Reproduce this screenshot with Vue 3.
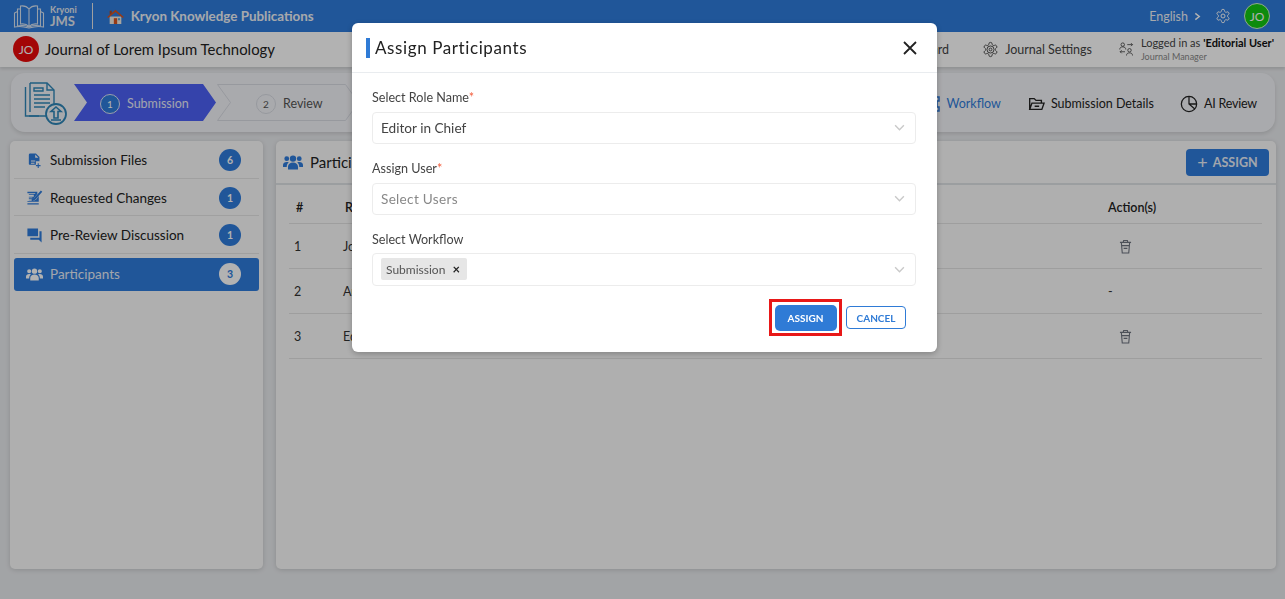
<template>
  <div class="page">
    <header class="topbar">
      <svg class="logo" viewBox="0 0 32 26" fill="none" stroke="#d9e4f2" stroke-width="1.1">
        <path d="M16 6C14 3.5 11 2.5 7.5 3v18c3.500-.5 6.500.3 8.500 2.500 2-2.200 5-3 8.500-2.500V3C21 2.500 18 3.500 16 6zM16 6v17" />
        <path d="M7.500 6H4.500v17c4-.8 8-.5 11.500 1 3.500-1.500 7.500-1.800 11.500-1V6h-3" />
        <path d="M4.500 8.500L1.500 10v14c4-1 9-.6 14.500 1 5.500-1.600 10.500-2 14.500-1V10l-3-1.500" />
      </svg>
      <div class="logo-text"><span>Kryoni</span><b>JMS</b></div>
      <div class="top-sep"></div>
      <svg class="home" viewBox="0 0 20 18">
        <path d="M3 9h14v9H3z" fill="#f1ece4" />
        <path d="M8 11h4v7H8z" fill="#d9531e" />
        <path d="M13 11h2.500v2.500H13z" fill="#5aa5d8" />
        <path d="M10 1L0 9.500l1.300 1.300L10 3.500l8.700 7.300 1.300-1.300z" fill="#d9531e" />
        <path d="M3 2h2.500v3L3 7z" fill="#b5461a" />
      </svg>
      <span class="pub">Kryon Knowledge Publications</span>
      <span class="lang">English <svg viewBox="0 0 8 10" class="lang-arrow" fill="none" stroke="#fff" stroke-width="1.700"><path d="M1.500 1.500L6 5l-4.500 3.500" /></svg></span>
      <svg class="top-gear" viewBox="0 0 24 24" fill="none" stroke="#fff" stroke-width="1.500">
        <path :d="gearPath" /><circle cx="12" cy="12" r="3" />
      </svg>
      <span class="avatar green">JO</span>
    </header>

    <div class="journalbar">
      <span class="avatar red">JO</span>
      <span class="journal-name">Journal of Lorem Ipsum Technology</span>
      <nav class="journal-nav">
        <span class="jn-item dash">Dashboard</span>
        <span class="jn-item settings">
          <svg viewBox="0 0 24 24" fill="none" stroke="#444" stroke-width="1.300">
            <path :d="gearPath" /><circle cx="12" cy="12" r="5" /><circle cx="12" cy="12" r="2" />
          </svg>
          Journal Settings
        </span>
        <span class="jn-user">
          <svg viewBox="0 0 20 20" fill="none" stroke="#444" stroke-width="1.100">
            <circle cx="5" cy="3.500" r="2.300" /><path d="M1 10c0-2.500 1.500-3.500 4-3.500S9 7.500 9 10" />
            <circle cx="14" cy="11" r="2.300" /><path d="M10 18c0-2.500 1.500-3.500 4-3.500s4 1 4 3.500" />
            <path d="M11 3.500h7M16 1.500l2 2-2 2M8 13H1.500M3.500 11l-2 2 2 2" />
          </svg>
          <span class="jn-user-text">
            <span class="jn-logged">Logged in as <b>'Editorial User'</b></span>
            <span class="jn-role">Journal Manager</span>
          </span>
        </span>
      </nav>
    </div>

    <section class="stepper">
      <svg class="step-doc" viewBox="0 0 44 44" fill="none" stroke="#2f86b8" stroke-width="1.400">
        <path d="M6 2h17l7 7v26H1.500V6" />
        <path d="M23 2v7h7" />
        <path d="M6 2v29" />
        <path d="M10 7h9v3h-9zM10 14h16M10 18h16M10 22h16M10 26h11M5 35h10" />
        <circle cx="32" cy="33" r="10" fill="#f0f2f6" stroke-width="1.800" />
        <path d="M32 26l5 4.500h-3V37h-4v-6.500h-3zM27 39h10" stroke-width="1.600" />
      </svg>
      <div class="step active">
        <svg class="step-shape" viewBox="0 0 142 37" preserveAspectRatio="none"><path d="M0 0h129l13 18.500-13 18.500H0l13-18.500z" fill="#4c61f5" /></svg>
        <span class="step-num">1</span><span class="step-label">Submission</span>
      </div>
      <div class="step next">
        <svg class="step-shape" viewBox="0 0 142 37" preserveAspectRatio="none"><path d="M.5.500h128l13 18-13 18H.5l13-18z" fill="none" stroke="#d8dbe3" /></svg>
        <span class="step-num">2</span><span class="step-label">Review</span>
      </div>
      <div class="step-tabs">
        <span class="tab current">
          <svg viewBox="0 0 18 18" fill="none" stroke="#2f7bd9" stroke-width="1.500"><path d="M2 2h4v4H2zM12 2h4v4h-4zM12 12h4v4h-4zM6 4h6M14 6v6" /></svg>
          Workflow
        </span>
        <span class="tab">
          <svg viewBox="0 0 20 18" fill="none" stroke="#222" stroke-width="1.500"><path d="M3 15V3h5l2 2h6v3M3 15l2.500-7H19l-2.500 7zM8.500 11.500h5" /></svg>
          Submission Details
        </span>
        <span class="tab ai">
          <svg viewBox="0 0 20 20" fill="none" stroke="#222" stroke-width="1.400"><circle cx="10" cy="10" r="8.500" /><path d="M10 1.500V10l6.500 5.500M10 10h8.500" /></svg>
          AI Review
        </span>
      </div>
    </section>

    <div class="content">
      <aside class="side">
        <div v-for="item in sideItems" :key="item.label" class="side-row" :class="{ on: item.on }">
          <svg class="side-ico" :viewBox="item.box || '0 0 24 24'"><path :d="item.icon" /></svg>
          <span class="side-label">{{ item.label }}</span>
          <span class="side-badge">{{ item.count }}</span>
        </div>
      </aside>
      <main class="panel">
        <div class="panel-head">
          <svg class="panel-ico" viewBox="0 0 24 20"><path :d="groupsPath" /></svg>
          <span class="panel-title">Participants</span>
          <button class="add-btn"><span class="plus">+</span> ASSIGN</button>
        </div>
        <table class="tbl">
          <thead>
            <tr><th class="c-n">#</th><th class="c-r">Role</th><th>User</th><th class="c-a">Action(s)</th></tr>
          </thead>
          <tbody>
            <tr v-for="(row, i) in rows" :key="row.role">
              <td>{{ i + 1 }}</td>
              <td :class="{ link: i === 0 }">{{ row.role }}</td>
              <td>{{ row.user }}</td>
              <td>
                <svg v-if="row.del" class="trash" viewBox="0 0 14 16" fill="none" stroke="#6f7480" stroke-width="1.200">
                  <path d="M1 3.500h12M4.500 3.500l.5-2h4l.5 2M2.500 3.500l1 11.500h7l1-11.500M3 7h8M5 10h4" />
                </svg>
                <span v-else>-</span>
              </td>
            </tr>
          </tbody>
        </table>
      </main>
    </div>

    <div class="overlay"></div>

    <div class="modal">
      <div class="modal-head">
        <span class="modal-bar"></span>
        <span class="modal-title">Assign Participants</span>
        <svg class="modal-close" viewBox="0 0 14 14" fill="none" stroke="#222" stroke-width="1.800"><path d="M1 1l12 12M13 1L1 13" /></svg>
      </div>
      <div class="modal-body">
        <label class="fld-label">Select Role Name<i>*</i></label>
        <div class="select">
          <span class="sel-val">Editor in Chief</span>
          <svg class="chev" viewBox="0 0 12 8" fill="none" stroke="#c9c9c9" stroke-width="1.600"><path d="M1 1.500l5 5 5-5" /></svg>
        </div>
        <label class="fld-label">Assign User<i>*</i></label>
        <div class="select">
          <span class="sel-ph">Select Users</span>
          <svg class="chev" viewBox="0 0 12 8" fill="none" stroke="#c9c9c9" stroke-width="1.600"><path d="M1 1.500l5 5 5-5" /></svg>
        </div>
        <label class="fld-label tight">Select Workflow</label>
        <div class="select tall">
          <span class="chip">Submission <span class="chip-x">×</span></span>
          <svg class="chev" viewBox="0 0 12 8" fill="none" stroke="#c9c9c9" stroke-width="1.600"><path d="M1 1.500l5 5 5-5" /></svg>
        </div>
        <div class="modal-actions">
          <span class="mark"><button class="btn-assign">ASSIGN</button></span>
          <button class="btn-cancel">CANCEL</button>
        </div>
      </div>
    </div>
  </div>
</template>

<script setup>
const gearPath = 'M12.22 2h-.44a2 2 0 0 0-2 2v.18a2 2 0 0 1-1 1.730l-.43.250a2 2 0 0 1-2 0l-.15-.08a2 2 0 0 0-2.730.730l-.22.380a2 2 0 0 0 .730 2.730l.15.100a2 2 0 0 1 1 1.720v.510a2 2 0 0 1-1 1.740l-.15.090a2 2 0 0 0-.730 2.730l.22.380a2 2 0 0 0 2.730.730l.15-.08a2 2 0 0 1 2 0l.43.250a2 2 0 0 1 1 1.730V20a2 2 0 0 0 2 2h.44a2 2 0 0 0 2-2v-.18a2 2 0 0 1 1-1.730l.43-.25a2 2 0 0 1 2 0l.15.080a2 2 0 0 0 2.730-.730l.22-.39a2 2 0 0 0-.730-2.730l-.15-.08a2 2 0 0 1-1-1.740v-.5a2 2 0 0 1 1-1.740l.15-.09a2 2 0 0 0 .730-2.730l-.22-.38a2 2 0 0 0-2.730-.730l-.15.080a2 2 0 0 1-2 0l-.43-.25a2 2 0 0 1-1-1.730V4a2 2 0 0 0-2-2z'
const groupsPath = 'M12 1.500a3.800 3.800 0 1 1 0 7.600 3.800 3.800 0 0 1 0-7.600zM4.500 2.500a2.900 2.900 0 1 1 0 5.800 2.900 2.900 0 0 1 0-5.800zM19.500 2.500a2.900 2.900 0 1 1 0 5.800 2.900 2.900 0 0 1 0-5.800zM6 18.500v-3.500c0-3 2.600-5 6-5s6 2 6 5v3.500zM0 15.500v-2.500c0-2 2-3.600 4.500-3.600.9 0 1.700.2 2.400.6C5.300 11.200 4.500 13 4.500 15v.5zM24 15.500v-2.500c0-2-2-3.600-4.500-3.600-.9 0-1.700.2-2.400.6 1.600 1.200 2.400 3 2.400 5v.5z'

const sideItems = [
  { label: 'Submission Files', count: 6, icon: 'M6 2h8l5 5v6h-5v5H5a1 1 0 0 1-1-1V4a2 2 0 0 1 2-2zm7 1.500V8h4.500zM7 12v1.500h6V12zm0 3v1.500h5V15zm11 1v2.500h2.500V20H18v2.500h-1.500V20H14v-1.500h2.500V16z' },
  { label: 'Requested Changes', count: 1, icon: 'M2 4h14v3l-5 6-.5 3.500L14 15l4-5v8H2v-1h6v-1H4v-1h4v-1H4v-1h5v-1H4v-1h7V8H4V7h9V6H2zm19-2l2 2-10 11-2.500 1 .5-2.500zM2 20h16v2H2z' },
  { label: 'Pre-Review Discussion', count: 1, icon: 'M22 6h-3v9H6v3h12l4 4V6zm-5 7V2H2v11z' },
  { label: 'Participants', count: 3, icon: groupsPath, box: '0 0 24 20', on: true }
]

const rows = [
  { role: 'Journal Manager', user: '', del: true },
  { role: 'Author', user: '', del: false },
  { role: 'Editor in Chief', user: '', del: true }
]
</script>

<style>
html, body { background: #fff; }
* { box-sizing: border-box; }
</style>

<style scoped>
.page {
  height: 599px; overflow: hidden; background: #e9ebee;
  font-family: Lato, "Noto Sans", sans-serif; color: #222;
  display: flex; flex-direction: column;
}

.topbar {
  height: 32px; flex-shrink: 0; background: #2e7bdb; color: #fff;
  display: flex; align-items: center; padding: 0 15px 0 13px;
}
.logo { width: 32px; height: 26px; }
.logo-text { display: flex; flex-direction: column; margin-left: 5px; line-height: 1; color: #e2e8f0; }
.logo-text span { font-size: 9px; font-weight: 700; }
.logo-text b { font-size: 13px; margin-top: 1px; }
.top-sep { width: 1px; height: 26px; background: #e6e6e6; margin: 0 14px 0 15px; }
.home { width: 17px; height: 15px; margin-right: 7px; }
.pub { font-size: 13.400px; font-weight: 700; color: #eef2f7; }
.lang { margin-left: auto; font-size: 12.500px; display: flex; align-items: center; gap: 6px; color: #eef2f7; }
.lang-arrow { width: 7px; height: 9px; }
.top-gear { width: 16px; height: 16px; margin: 0 13px 0 14px; }

.avatar {
  width: 26px; height: 26px; border-radius: 50%; color: #fff; font-size: 12px;
  display: flex; align-items: center; justify-content: center; flex-shrink: 0;
}
.green { background: #14c814; border: 1px solid #d0f0d0; }
.red { background: #ea0a0a; }

.journalbar {
  height: 35px; flex-shrink: 0; background: #fff; display: flex; align-items: center;
  padding: 0 11px 1px 13px; box-shadow: 0 2px 3px rgba(0,0,0,.12);
}
.journal-name { margin-left: 6px; font-size: 14.900px; color: #222; }
.journal-nav { margin-left: auto; display: flex; align-items: center; gap: 27px; }
.jn-item { font-size: 12.500px; color: #444; display: flex; align-items: center; gap: 6px; }
.jn-item svg { width: 17px; height: 17px; }
.dash { margin-right: 6px; }
.jn-user { display: flex; align-items: center; gap: 7px; }
.jn-user svg { width: 15px; height: 15px; }
.jn-user-text { display: flex; flex-direction: column; }
.jn-logged { font-size: 11px; color: #444; }
.jn-logged b { color: #111; }
.jn-role { font-size: 9px; color: #888; margin-top: 2px; }

.stepper {
  height: 59px; margin: 6px 10px 0 11px; flex-shrink: 0; background: #f3f4f8;
  border-radius: 14px; display: flex; align-items: center; padding: 0 18px 0 13px;
  box-shadow: 0 2px 4px rgba(0,0,0,.12);
}
.step-doc { width: 44px; height: 44px; margin-right: 6px; flex-shrink: 0; }
.step {
  width: 142px; height: 37px; position: relative; display: flex; align-items: center;
  padding: 2px 0 0 26px; gap: 7px; font-size: 12.500px; color: #555; flex-shrink: 0;
}
.next { margin-left: 1px; padding-left: 39px; }
.step-shape { position: absolute; inset: 0; width: 100%; height: 100%; }
.step-num {
  position: relative; width: 20px; height: 20px; border-radius: 50%; border: 1px solid #d8dbe3;
  display: flex; align-items: center; justify-content: center; font-size: 10px;
}
.step-label { position: relative; }
.active { color: #e8ebf8; }
.active .step-num { background: #2e7bdb; border-color: #dfe5f5; color: #fff; }
.step-tabs { margin-left: auto; display: flex; align-items: center; gap: 26px; padding-top: 2px; }
.tab { font-size: 12.500px; color: #222; display: flex; align-items: center; gap: 6px; }
.tab svg { width: 18px; height: 18px; }
.tab.current { color: #2f7bd9; }
.tab.ai { letter-spacing: -.2px; }

.content { flex: 1; display: flex; gap: 13px; margin: 9px 9px 30px 10px; min-height: 0; }
.side {
  width: 253px; flex-shrink: 0; background: #fbfbfb; border-radius: 5px; padding: 0 4px;
  box-shadow: 0 1px 5px rgba(0,0,0,.15);
}
.side-row {
  height: 37.500px; display: flex; align-items: center; padding: 2px 18px 0 12px;
  border-bottom: 1px solid #e6e6e6; font-size: 13.500px; color: #222;
}
.side-ico { width: 17px; height: 17px; fill: #2e7bdb; margin-right: 7px; flex-shrink: 0; }
.side-badge {
  margin-left: auto; width: 22px; height: 22px; border-radius: 50%; background: #2e7bdb; color: #fff;
  display: flex; align-items: center; justify-content: center; font-size: 10.500px; font-weight: 700;
}
.side-row.on { background: #2e7bdb; color: #e8eef7; border: 0; border-radius: 3px; height: 33px; margin-top: 4px; padding-top: 0; }
.on .side-ico { fill: #fff; }
.on .side-badge { background: #fff; color: #2e7bdb; }

.panel { flex: 1; background: #fbfbfb; border-radius: 5px; box-shadow: 0 1px 5px rgba(0,0,0,.15); }
.panel-head {
  height: 44px; display: flex; align-items: center; padding: 0 7px;
  border-bottom: 2px solid #dfe2e6;
}
.panel-ico { width: 20px; height: 17px; fill: #2e7bdb; margin-right: 7px; }
.panel-title { font-size: 15px; color: #222; }
.add-btn {
  margin-left: auto; width: 83px; height: 27px; background: #2e7bdb; color: #e8eef7; border: 0;
  border-radius: 4px; font: 700 12.500px Lato, sans-serif; display: flex; align-items: center;
  justify-content: center; gap: 5px;
}
.plus { font-size: 18px; font-weight: 400; line-height: 1; }
.tbl { width: 973px; margin: 4px 0 0 13px; border-collapse: collapse; font-size: 12.500px; table-layout: fixed; }
.tbl th { height: 34px; text-align: left; font-weight: 600; color: #222; border-bottom: 1px solid #e3e3e3; padding: 3px 0 0 7px; }
.tbl td { height: 45px; color: #333; border-bottom: 1px solid #e3e3e3; padding: 1px 0 0 5px; }
.c-n { width: 49px; }
.c-r { width: 250px; }
.tbl th.c-a { width: 154px; padding-left: 0; }
.tbl td:last-child { padding-left: 0; }
.link { color: #2e7bdb; }
.trash { width: 13px; height: 15px; margin-left: 11px; display: block; }

.overlay { position: fixed; inset: 0; background: rgba(0,0,0,.3); }

.modal {
  position: fixed; top: 23px; left: 352px; width: 585px; background: #fff; border-radius: 6px;
  box-shadow: 0 2px 6px rgba(0,0,0,.25);
}
.modal-head { height: 50px; display: flex; align-items: center; padding: 0 20px 0 14px; border-bottom: 1px solid #e9ecef; }
.modal-bar { width: 4px; height: 20px; background: #2f7bd6; margin-right: 5px; }
.modal-title { font-size: 17px; color: #222; letter-spacing: .6px; }
.modal-close { width: 14px; height: 14px; margin-left: auto; }
.modal-body { padding: 0 21px 16px 20px; }
.fld-label { display: block; font-size: 12.600px; color: #444; margin: 17px 0 6px; line-height: 16px; }
.fld-label.tight { margin-bottom: 5px; }
.fld-label i { color: #f25c3b; font-style: normal; }
.select {
  height: 32px; border: 1px solid #ececec; border-radius: 4px; display: flex; align-items: center;
  padding: 0 10px 1px 8px; font-size: 13.600px; color: #444;
}
.select.tall { height: 33px; }
.sel-ph { color: #888; letter-spacing: .3px; }
.chev { width: 11px; height: 7px; margin-left: auto; }
.chip {
  background: #e6e6e6; border-radius: 2px; height: 22px; width: 86px; padding: 0 5px; font-size: 12px;
  color: #555; display: flex; align-items: center; justify-content: space-between;
}
.chip-x { font-size: 13px; font-weight: 700; color: #222; padding-right: 2px; }
.modal-actions { display: flex; justify-content: flex-end; align-items: center; gap: 4px; margin-top: 13px; padding-right: 10px; }
.mark { border: 3px solid #e81818; padding: 2.500px; width: 73px; height: 37px; display: block; }
.btn-assign {
  display: block; width: 62px; height: 26px; background: #2f7bd6; color: #fff; border: 0; border-radius: 5px;
  font: 700 10px Lato, sans-serif;
}
.btn-cancel {
  width: 60px; height: 23px; background: #fff; color: #2f7bd6; border: 1px solid #2f7bd6; border-radius: 4px;
  font: 700 10px Lato, sans-serif;
}
</style>
